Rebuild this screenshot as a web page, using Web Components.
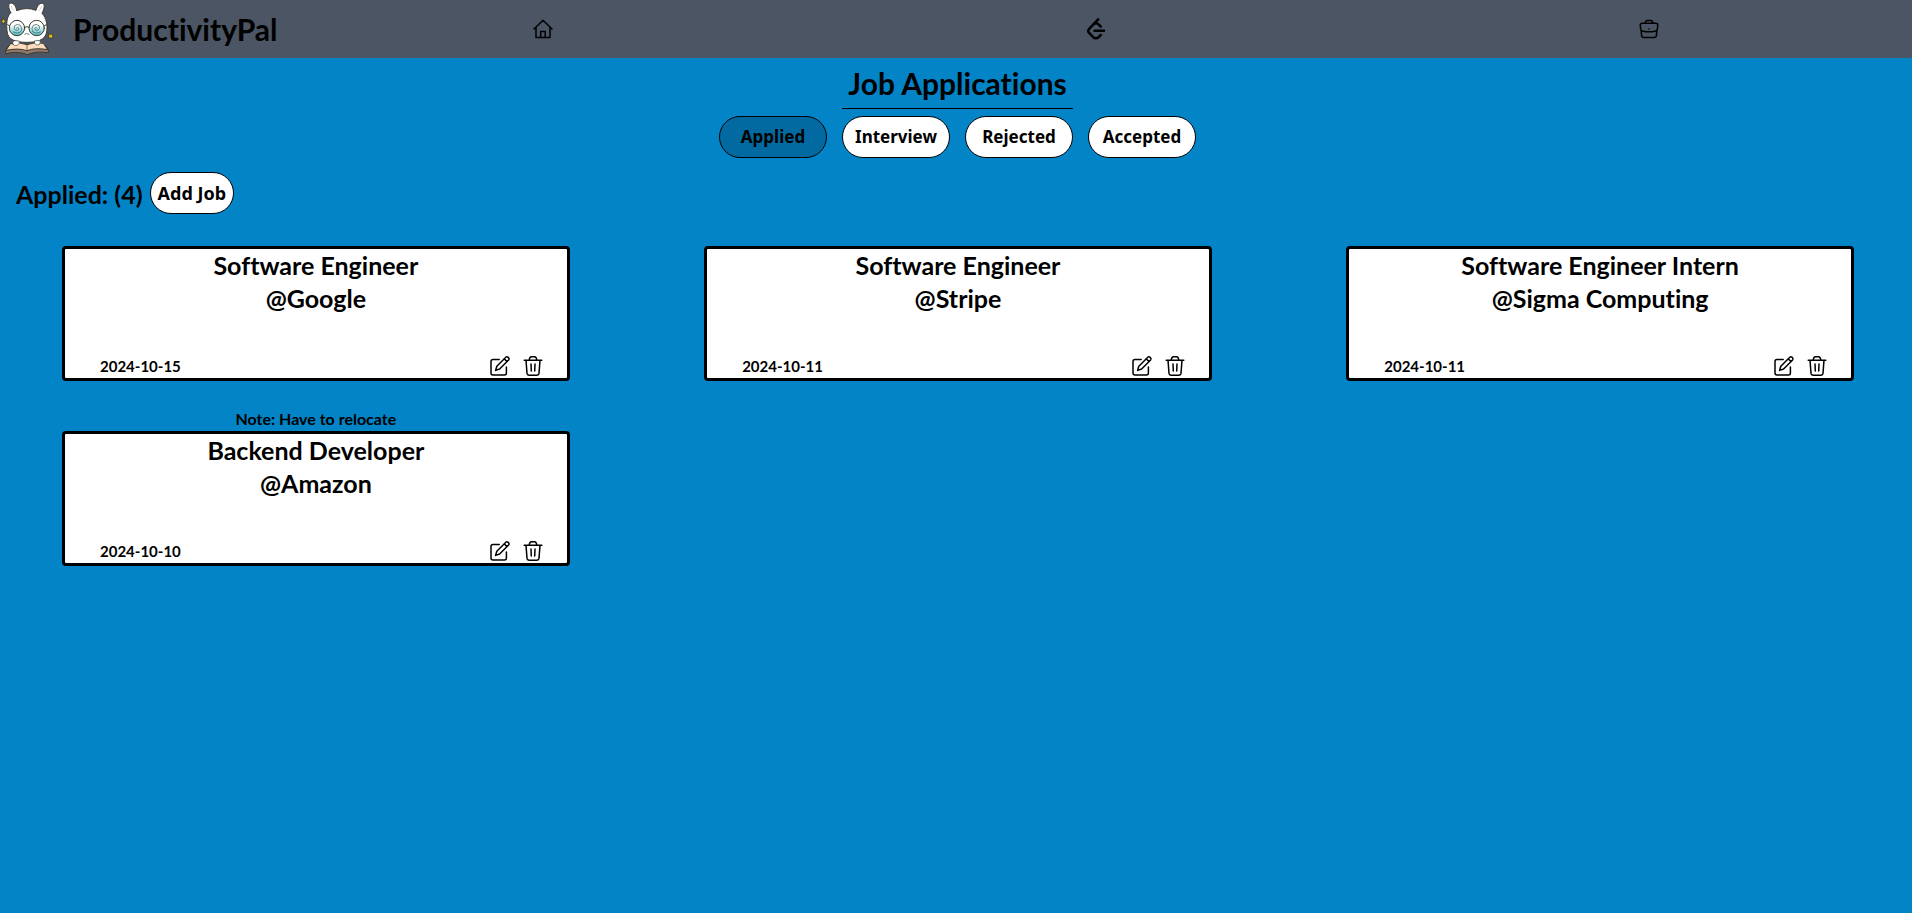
<!DOCTYPE html>
<html lang="en">
<head>
<meta charset="utf-8">
<title>ProductivityPal</title>
<style>
  body { margin: 0; min-height: 100vh; background: #0284c7; color: #000; font-family: Lato, "Open Sans", sans-serif; font-weight: 700; font-variant-ligatures: none; }
</style>
</head>
<body>
<pal-app></pal-app>
<script>
const ICONS = {
  home: '<path d="M2 11 L11 2.2 L20 11 M4 9.5 V19.6 H18 V9.5 M8.7 19.4 V13.6 H13.2 V19.4"/>',
  leetcode: '<g stroke-width="2.5"><path d="M13.2 1.4 L3.9 11.2 Q2.5 12.9 3.9 14.6 L8 19 Q10.8 21.6 13.8 19 L15.8 17"/><path d="M8.8 6 Q11.6 4.4 13.8 6.6 L15.8 8.6"/><path d="M9.6 12.8 H19"/></g>',
  work: '<path d="M4.2 5.2 H17.8 Q19.8 5.2 19.8 7.2 L19.2 11.4 Q18.8 12.8 17 13.2 Q11 14.4 5 13.2 Q3.2 12.8 2.8 11.4 L2.2 7.2 Q2.2 5.2 4.2 5.2 Z"/><path d="M3.2 12.6 L3.6 17.6 Q3.8 19.4 5.6 19.4 H16.4 Q18.2 19.4 18.4 17.6 L18.8 12.6"/><path d="M7.2 5 Q7.6 2.4 9.2 2.4 H12.8 Q14.4 2.4 14.8 5"/><circle cx="11" cy="11" r=".8" fill="#000" stroke="none"/>',
  edit: '<path d="M10.2 4.4 H4 Q2 4.4 2 6.4 V18 Q2 20 4 20 H15.4 Q17.4 20 17.4 18 V12"/><path d="M6.6 15.4 L7.8 11.2 L16.8 2.2 Q17.8 1.2 19.2 2.4 Q20.6 3.8 19.6 5 L10.6 14 Z M15.2 3.8 L18 6.6"/>',
  trash: '<path d="M2.2 5.2 H19.8 M4 5.2 L5 18.4 Q5.2 20.2 7 20.2 H15 Q16.8 20.2 17 18.4 L18 5.2 M7.2 5 Q7.6 1.8 9.4 1.8 H12.6 Q14.4 1.8 14.8 5 M9 9 L9.3 16 M13 9 L12.7 16"/>'
};

function define(name, html) {
  const template = document.createElement('template');
  template.innerHTML = html;
  customElements.define(name, class extends HTMLElement {
    constructor() {
      super();
      this.attachShadow({ mode: 'open' }).append(template.content.cloneNode(true));
    }
  });
}

customElements.define('pal-icon', class extends HTMLElement {
  constructor() { super(); this.attachShadow({ mode: 'open' }); }
  connectedCallback() {
    this.shadowRoot.innerHTML = `
      <style>
        :host { display: block; width: 22px; height: 22px; }
        svg { display: block; width: 100%; height: 100%; fill: none; stroke: #000; stroke-width: 1.5; stroke-linecap: round; stroke-linejoin: round; }
      </style>
      <svg viewBox="0 0 22 22" aria-hidden="true">${ICONS[this.getAttribute('name')]}</svg>`;
  }
});

define('pal-mascot', `
  <style>:host { display: block; } svg { display: block; width: 56px; height: 58px; }</style>
  <svg viewBox="0 0 168 174" role="img" aria-label="Mascot reading a book" stroke="#3b3a2c" stroke-width="3" stroke-linejoin="round" stroke-linecap="round">
    <path d="M32 38 C24 22 24 9 33 9 C42 9 48 20 50 32 Q80 20 108 31 C112 18 117 9 127 10 C136 12 133 26 126 40 C140 54 143 78 140 96 C136 122 108 127 80 127 C48 127 22 120 21 92 C19 70 20 50 32 38 Z" fill="#fff"/>
    <path d="M34 18 Q36 28 41 32 M125 19 Q122 28 116 33" stroke="#c9b9b0" stroke-width="2" fill="none"/>
    <path d="M24 140 L17 152 V161 Q48 154 70 160 L82 164 L94 160 Q112 154 146 158 V150 L138 138 Z" fill="#8f776b"/>
    <path d="M32 131 Q56 124 81 134 Q108 124 130 130 L143 149 Q106 142 81 152 Q54 143 19 151 Z" fill="#ffdcbd"/>
    <path d="M81 134 V152" stroke-width="2"/>
    <path d="M39 133 Q35 122 46 122 L57 123 Q62 131 51 136 Q43 139 39 133 Z M104 123 L117 121 Q124 124 119 133 Q110 139 104 131 Z" fill="#fff" stroke-width="2"/>
    <linearGradient id="lens" x2="0" y2="1"><stop offset=".3" stop-color="#fff"/><stop offset="1" stop-color="#42bfcb"/></linearGradient>
    <circle cx="51" cy="84" r="23" fill="url(#lens)"/>
    <circle cx="110" cy="84" r="23" fill="url(#lens)"/>
    <path d="M74 82 Q80 77 87 82 M29 78 L23 74 M132 78 L139 74" fill="none"/>
    <g fill="none" stroke="#566b66" stroke-width="2.5">
      <path d="M49 85 Q53 79 57 85 Q56 93 47 91 Q39 85 44 77 Q52 70 61 76 Q69 86 62 96 Q50 103 40 96"/>
      <path d="M112 85 Q108 79 104 85 Q105 93 114 91 Q122 85 117 77 Q109 70 100 76 Q92 86 99 96 Q111 103 121 96"/>
      <path d="M74 103 Q80 97 87 103"/>
    </g>
    <path d="M10 55 L13 61 L18 64 L12 67 L10 73 L7 66 L3 63 L8 61 Z M147 100 L152 104 L159 102 L157 108 L158 115 L151 113 L145 114 L147 107 Z" fill="#f3c814" stroke-width="2"/>
  </svg>`);

define('pal-header', `
  <style>
    :host { display: flex; align-items: center; background: #4b5563; height: 58px; }
    h1 { margin: 0 0 0 17px; font-size: 30px; line-height: 40px; }
    nav { flex: 1; display: flex; justify-content: space-between; padding: 0 13.2% 0 13.3%; }
    a { display: block; color: inherit; }
  </style>
  <pal-mascot></pal-mascot>
  <h1>ProductivityPal</h1>
  <nav aria-label="Main">
    <a href="#home" aria-label="Home"><pal-icon name="home"></pal-icon></a>
    <a href="#leetcode" aria-label="LeetCode"><pal-icon name="leetcode"></pal-icon></a>
    <a href="#jobs" aria-label="Jobs"><pal-icon name="work"></pal-icon></a>
  </nav>`);

define('pal-pill', `
  <style>
    :host { display: block; }
    button { display: block; width: 100%; height: 42px; padding: 0 7px; border: 1px solid #000; border-radius: 21px; background: #fff; color: #000; font: 700 17px/28px "Noto Sans", "Open Sans", sans-serif; white-space: nowrap; }
    :host([active]) button { background: #0369a1; }
    :host([large]) button { font-size: 18px; }
  </style>
  <button type="button"><slot></slot></button>`);

define('job-card', `
  <style>
    :host { display: block; text-align: center; font-size: 16px; line-height: 24px; }
    .note { min-height: 24px; }
    article { box-sizing: border-box; height: 135px; border: 3px solid #000; border-radius: 4px; background: #fff; display: flex; flex-direction: column; justify-content: space-between; }
    h3 { margin: 0; font-size: 25px; line-height: 33px; }
    h3 ::slotted(span) { display: block; }
    footer { display: flex; align-items: center; gap: 11px; padding: 0 23px 0 35px; }
    .date { margin-right: auto; font-size: 15px; }
    button { border: 0; padding: 0; background: none; }
  </style>
  <div class="note"><slot name="note"></slot></div>
  <article>
    <h3><slot name="role"></slot><slot name="company"></slot></h3>
    <footer>
      <span class="date"><slot name="date"></slot></span>
      <button type="button" aria-label="Edit job"><pal-icon name="edit"></pal-icon></button>
      <button type="button" aria-label="Delete job"><pal-icon name="trash"></pal-icon></button>
    </footer>
  </article>`);

define('pal-app', `
  <style>
    :host { display: block; }
    .top { display: flex; flex-direction: column; align-items: center; gap: 7px; padding: 6px 0 0 3px; }
    h2 { margin: 0; padding: 0 6px 6px; border-bottom: 1px solid #000; font-size: 30px; line-height: 38px; }
    .tabs { display: grid; grid-template-columns: repeat(4, 108px); gap: 15px; }
    .bar { display: flex; align-items: center; gap: 7px; padding: 14px 16px 8px; }
    .bar h3 { margin: 0; padding-top: 2px; font-size: 25px; line-height: 33px; }
    .jobs { display: grid; grid-template-columns: repeat(3, 1fr); gap: 26px 7.5%; padding: 0 58px 26px 62px; }
  </style>
  <pal-header></pal-header>
  <main>
    <div class="top">
      <h2>Job Applications</h2>
      <div class="tabs">
        <pal-pill active>Applied</pal-pill>
        <pal-pill>Interview</pal-pill>
        <pal-pill>Rejected</pal-pill>
        <pal-pill>Accepted</pal-pill>
      </div>
    </div>
    <div class="bar"><h3>Applied: (4)</h3><pal-pill large>Add Job</pal-pill></div>
    <section class="jobs" aria-label="Applied jobs">
      <job-card><span slot="role">Software Engineer</span><span slot="company">@Google</span><time slot="date">2024-10-15</time></job-card>
      <job-card><span slot="role">Software Engineer</span><span slot="company">@Stripe</span><time slot="date">2024-10-11</time></job-card>
      <job-card><span slot="role">Software Engineer Intern</span><span slot="company">@Sigma Computing</span><time slot="date">2024-10-11</time></job-card>
      <job-card><span slot="note">Note: Have to relocate</span><span slot="role">Backend Developer</span><span slot="company">@Amazon</span><time slot="date">2024-10-10</time></job-card>
    </section>
  </main>`);
</script>
</body>
</html>
